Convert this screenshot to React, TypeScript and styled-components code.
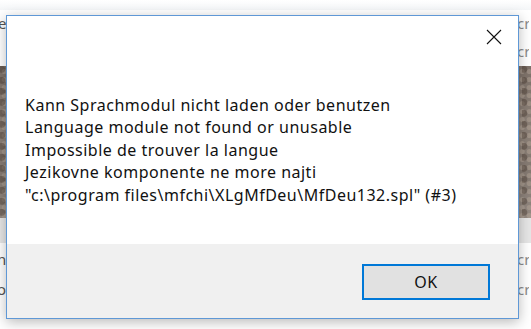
import React from "react";
import styled, { createGlobalStyle } from "styled-components";

const Global = createGlobalStyle`
  html, body { margin: 0; padding: 0; background: #ffffff; }
  body { width: 531px; height: 329px; overflow: hidden; font-family: "Segoe UI", "Noto Sans", "Open Sans", sans-serif; }
  #root { width: 531px; height: 329px; }
`;

const Page = styled.div`
  position: relative;
  width: 531px;
  height: 329px;
  overflow: hidden;
  background: #ffffff;
`;

const Backdrop = styled.div`
  display: flex;
  flex-direction: column;
  width: 100%;
  height: 100%;
`;

const TopShade = styled.div`
  height: 10px;
  background: linear-gradient(#ffffff, #f4f6f8);
`;

const BgRow = styled.div<{ $h: number }>`
  height: ${(p) => p.$h}px;
  display: flex;
  justify-content: space-between;
  align-items: center;
  padding: 0 2px 0 0;
  font-family: "Noto Sans", "Open Sans", sans-serif;
  font-size: 15px;
  color: #555;
  box-sizing: border-box;
`;

const Frag = styled.span<{ $offset?: number }>`
  margin-left: ${(p) => p.$offset ?? 0}px;
`;

const RightFrag = styled.span`
  color: #8a8a8a;
  width: 12px;
  overflow: hidden;
  white-space: nowrap;
`;

const PhotoBand = styled.div`
  height: 152px;
  background:
    radial-gradient(circle at 20% 30%, rgba(60, 45, 35, 0.35) 0 3px, transparent 4px) 0 0 / 9px 11px,
    radial-gradient(circle at 60% 70%, rgba(190, 175, 160, 0.4) 0 2px, transparent 3px) 0 0 / 7px 8px,
    linear-gradient(180deg, #7d7169 0%, #8d8178 40%, #857a72 70%, #948a82 100%);
`;

const GrayBand = styled.div`
  height: 25px;
  background: #e6e6e6;
`;

const Dialog = styled.div`
  position: absolute;
  left: 6px;
  top: 15px;
  width: 513px;
  height: 304px;
  box-sizing: border-box;
  border: 1px solid #5f98d6;
  background: #ffffff;
  box-shadow: 0 3px 12px rgba(0, 0, 0, 0.28);
  display: flex;
  flex-direction: column;
`;

const TitleBar = styled.div`
  height: 42px;
  display: flex;
  justify-content: flex-end;
  align-items: center;
  padding-right: 15px;
`;

const CloseButton = styled.button`
  width: 18px;
  height: 18px;
  padding: 0;
  border: none;
  background: transparent;
  display: flex;
  align-items: center;
  justify-content: center;
`;

const Body = styled.div`
  flex: 1;
  padding: 36px 0 0 18px;
  font-family: "Segoe UI", "Noto Sans", "Open Sans", sans-serif;
  font-size: 16px;
  letter-spacing: 0.5px;
  line-height: 22.4px;
  color: #111111;
`;

const Line = styled.div`
  white-space: pre;
`;

const Footer = styled.div`
  height: 74px;
  background: #f0f0f0;
  display: flex;
  justify-content: flex-end;
  align-items: flex-start;
  padding: 20px 28px 0 0;
  box-sizing: border-box;
`;

const OkButton = styled.button`
  width: 128px;
  height: 36px;
  box-sizing: border-box;
  border: 2px solid #0078d7;
  background: #e1e1e1;
  font-family: "Segoe UI", "Noto Sans", "Open Sans", sans-serif;
  font-size: 16px;
  letter-spacing: 0.5px;
  color: #111111;
  padding: 0;
`;

const lines = [
  "Kann Sprachmodul nicht laden oder benutzen",
  "Language module not found or unusable",
  "Impossible de trouver la langue",
  "Jezikovne komponente ne more najti",
  "\"c:\\program files\\mfchi\\XLgMfDeu\\MfDeu132.spl\" (#3)",
];

export default function App() {
  return (
    <Page>
      <Global />
      <Backdrop>
        <TopShade />
        <BgRow $h={26}>
          <Frag $offset={-2}>e</Frag>
          <RightFrag>cr</RightFrag>
        </BgRow>
        <BgRow $h={30}>
          <Frag />
          <RightFrag>cr</RightFrag>
        </BgRow>
        <PhotoBand />
        <GrayBand />
        <BgRow $h={32}>
          <Frag $offset={-3}>n</Frag>
          <RightFrag>cr</RightFrag>
        </BgRow>
        <BgRow $h={28}>
          <Frag $offset={-3}>o</Frag>
          <RightFrag>cr</RightFrag>
        </BgRow>
      </Backdrop>
      <Dialog>
        <TitleBar>
          <CloseButton aria-label="Close">
            <svg width="16" height="16" viewBox="0 0 16 16">
              <path d="M1 1 L15 15 M15 1 L1 15" stroke="#111" strokeWidth="1.1" fill="none" />
            </svg>
          </CloseButton>
        </TitleBar>
        <Body>
          {lines.map((l) => (
            <Line key={l}>{l}</Line>
          ))}
        </Body>
        <Footer>
          <OkButton>OK</OkButton>
        </Footer>
      </Dialog>
    </Page>
  );
}
